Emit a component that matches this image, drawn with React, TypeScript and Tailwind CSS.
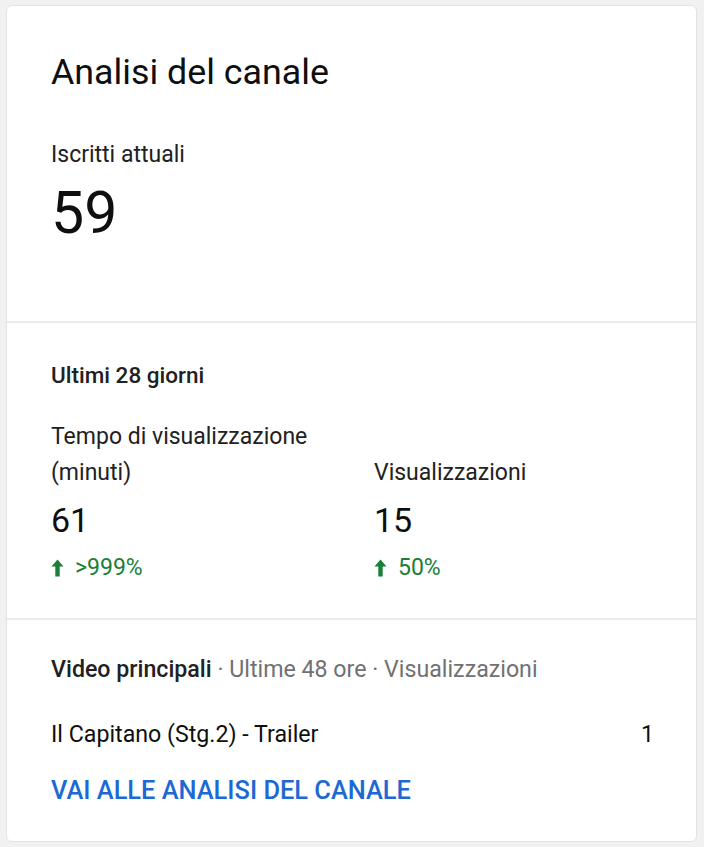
import React from "react";

function UpArrow() {
  return (
    <svg width="13" height="18" viewBox="0 0 13 18" className="shrink-0">
      <path d="M6.5 0.5 L12.5 7.5 H8.7 V17.5 H4.3 V7.5 H0.5 Z" fill="#188038" />
    </svg>
  );
}

export default function App() {
  return (
    <div
      className="min-h-[847px] w-[704px] bg-[#f1f1f1] pt-[5px] pl-[6px] pr-[7px] pb-[6px]"
      style={{ fontFamily: "Roboto, 'Noto Sans', sans-serif" }}
    >
      <div className="flex flex-col rounded-[6px] border border-[#e3e3e3] bg-white">
        {/* Section 1 */}
        <div className="px-[44px] pt-[46px] pb-[76px]">
          <div className="text-[35.8px] leading-[40px] text-[#0f0f0f]">Analisi del canale</div>
          <div className="mt-[48px] text-[23px] leading-[30px] text-[#212121]">Iscritti attuali</div>
          <div className="mt-[11px] text-[59px] leading-[64px] text-[#0f0f0f]">59</div>
        </div>
        <div className="h-[2px] bg-[#ececec]" />
        {/* Section 2 */}
        <div className="px-[44px] pt-[38px] pb-[38px]">
          <div className="text-[22.5px] font-medium leading-[28px] text-[#212121]">Ultimi 28 giorni</div>
          <div className="mt-[30px] grid grid-cols-[323px_1fr] items-end">
            <div className="text-[23px] leading-[36px] text-[#212121]">
              Tempo di visualizzazione
              <br />
              (minuti)
            </div>
            <div className="text-[23px] leading-[36px] text-[#212121]">Visualizzazioni</div>
            <div className="mt-[9px] text-[34px] leading-[40px] text-[#0f0f0f]">61</div>
            <div className="mt-[9px] text-[34px] leading-[40px] text-[#0f0f0f]">15</div>
            <div className="mt-[16px] flex items-center gap-[11px] text-[23px] leading-[24px] text-[#188038]">
              <UpArrow />
              <span>&gt;999%</span>
            </div>
            <div className="mt-[16px] flex items-center gap-[11px] text-[23px] leading-[24px] text-[#188038]">
              <UpArrow />
              <span>50%</span>
            </div>
          </div>
        </div>
        <div className="h-[2px] bg-[#ececec]" />
        {/* Section 3 */}
        <div className="px-[44px] pt-[34px] pb-[36px]">
          <div className="text-[23.2px] leading-[30px] text-[#717171]">
            <span className="font-medium text-[#212121]">Video principali</span> · Ultime 48 ore · Visualizzazioni
          </div>
          <div className="mt-[35px] flex items-center justify-between text-[23.2px] leading-[30px] text-[#0f0f0f]">
            <span>Il Capitano (Stg.2) - Trailer</span>
            <span className="-mr-[2px]">1</span>
          </div>
          <div className="mt-[26px] text-[25.4px] font-medium leading-[30px] text-[#1c69d4]">
            VAI ALLE ANALISI DEL CANALE
          </div>
        </div>
      </div>
    </div>
  );
}
